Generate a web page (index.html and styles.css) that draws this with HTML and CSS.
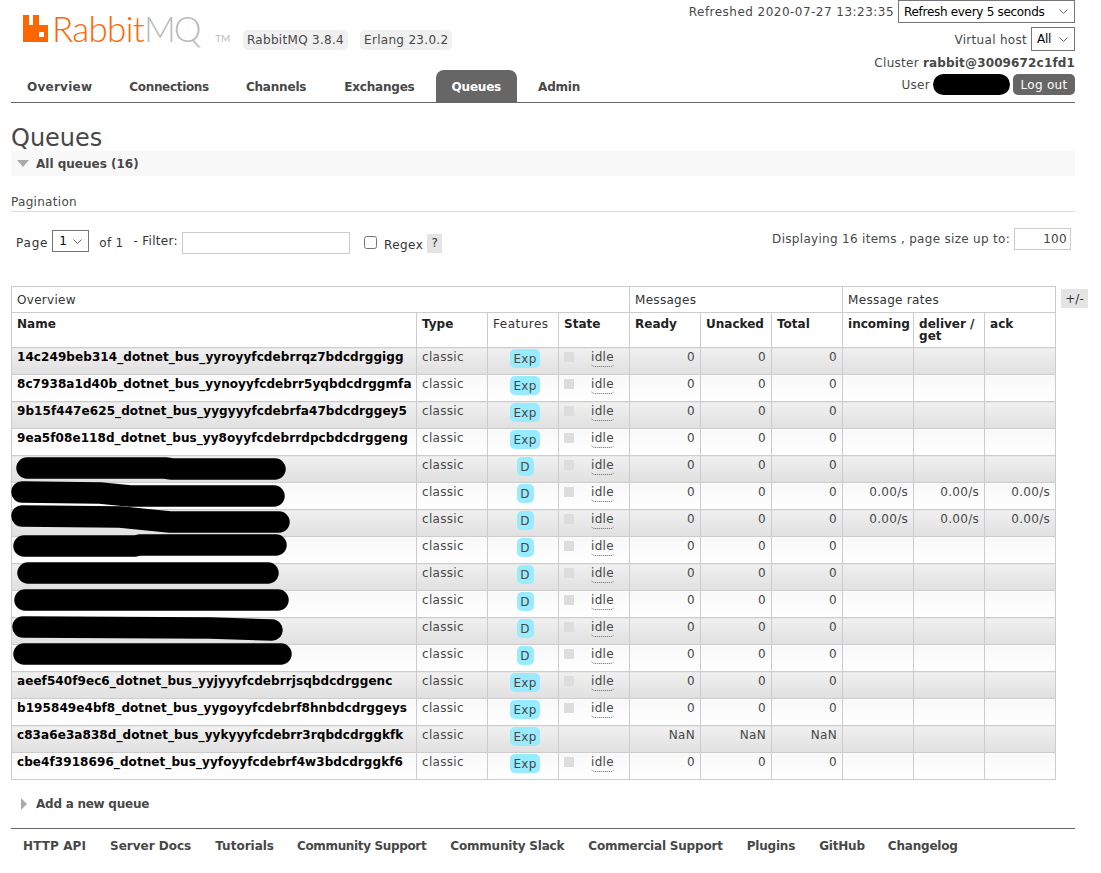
FILE: index.html
```html
<!DOCTYPE html>
<html lang="en">
<head>
  <meta charset="UTF-8">
  <meta name="viewport" content="width=device-width, initial-scale=1.0">
  <title>RabbitMQ Management</title>
  <link rel="stylesheet" href="styles.css">
</head>
<body>
  <!-- Header -->
  <div class="header">
    <div class="header-left">
      <div class="brand">
        <div class="logo">
          <svg class="logo-icon" width="25" height="27" viewBox="0 0 25 27">
            <path fill="#ff6600" d="M0 0H6V10H10V0H16V10H25V27H0Z"/>
            <rect fill="#fff" x="16" y="17" width="5" height="5"/>
          </svg>
          <span class="logo-rabbit">Rabbit</span><span class="logo-mq">MQ</span><span class="logo-tm">TM</span>
        </div>
        <span class="version">RabbitMQ 3.8.4</span>
        <span class="version">Erlang 23.0.2</span>
      </div>
      <ul class="tabs">
        <li><a href="#">Overview</a></li>
        <li><a href="#">Connections</a></li>
        <li><a href="#">Channels</a></li>
        <li><a href="#">Exchanges</a></li>
        <li><a href="#" class="active">Queues</a></li>
        <li><a href="#">Admin</a></li>
      </ul>
    </div>
    <div class="header-right">
      <div class="status-row">
        <span class="refreshed">Refreshed 2020-07-27 13:23:35</span>
        <select class="refresh-select"><option>Refresh every 5 seconds</option></select>
      </div>
      <div class="status-row vhost-row">
        <span class="vhost-label">Virtual host</span>
        <select class="vhost-select"><option>All</option></select>
      </div>
      <div class="status-row cluster-row"><span>Cluster</span> <b>rabbit@3009672c1fd1</b></div>
      <div class="status-row user-row">
        User
        <span class="user-blob"></span>
        <button class="logout">Log out</button>
      </div>
    </div>
  </div>

  <!-- Main Content -->
  <div class="main-content">
    <h1>Queues</h1>
    <div class="section-head"><span class="arrow-down"></span>All queues (16)</div>

    <h3 class="pagination-title">Pagination</h3>
    <div class="pagination">
      <div class="pagination-left">
        <span class="page-label">Page</span>
        <select class="page-select"><option>1</option></select>
        <span class="of-pages">of 1</span>
        <span class="filter-label">- Filter:</span>
        <input class="filter-input" type="text">
        <input class="regex-check" type="checkbox">
        <span class="regex-label">Regex</span>
        <span class="help">?</span>
      </div>
      <div class="pagination-right">
        Displaying 16 items , page size up to:
        <input class="page-size" type="text" value="100">
      </div>
    </div>

    <div class="table-wrap">
      <table class="list">
        <colgroup>
          <col class="col-name"><col class="col-data"><col class="col-data"><col class="col-data">
          <col class="col-data"><col class="col-data"><col class="col-data">
          <col class="col-data"><col class="col-data"><col class="col-data">
        </colgroup>
        <thead>
          <tr class="group-row">
            <th colspan="4">Overview</th>
            <th colspan="3">Messages</th>
            <th colspan="3">Message rates</th>
          </tr>
          <tr class="title-row">
            <th>Name</th><th>Type</th><th class="plain">Features</th><th>State</th>
            <th>Ready</th><th>Unacked</th><th>Total</th>
            <th>incoming</th><th>deliver / get</th><th>ack</th>
          </tr>
        </thead>
        <tbody id="queueRows"></tbody>
      </table>

      <!-- hand drawn redaction over the queue names -->
      <svg class="redactions" width="300" height="400" viewBox="0 287 300 400">
        <g fill="none" stroke="#000" stroke-width="21.500" stroke-linecap="round" stroke-linejoin="round">
          <path d="M27 469H165L172 470H275"/>
          <path d="M22 493L100 494L130 497H274"/>
          <path d="M22 517L120 518L170 523H279"/>
          <path d="M24 547H135"/>
          <path d="M140 546H276"/>
          <path d="M28 574H268"/>
          <path d="M25 601H278"/>
          <path d="M23 628L210 629L272 631"/>
          <path d="M24 655H281"/>
        </g>
      </svg>
      <button class="columns-toggle">+/-</button>
    </div>

    <div class="add-queue"><span class="arrow-right"></span>Add a new queue</div>
  </div>

  <!-- Footer -->
  <ul class="footer">
    <li><a href="#">HTTP API</a></li>
    <li><a href="#">Server Docs</a></li>
    <li><a href="#">Tutorials</a></li>
    <li><a href="#">Community Support</a></li>
    <li><a href="#">Community Slack</a></li>
    <li><a href="#">Commercial Support</a></li>
    <li><a href="#">Plugins</a></li>
    <li><a href="#">GitHub</a></li>
    <li><a href="#">Changelog</a></li>
  </ul>

  <script>
    // name, feature badge, rates or NaN row
    const queues = [
      ["14c249beb314_dotnet_bus_yyroyyfcdebrrqz7bdcdrggigg", "Exp"],
      ["8c7938a1d40b_dotnet_bus_yynoyyfcdebrr5yqbdcdrggmfa", "Exp"],
      ["9b15f447e625_dotnet_bus_yygyyyfcdebrfa47bdcdrggey5", "Exp"],
      ["9ea5f08e118d_dotnet_bus_yy8oyyfcdebrrdpcbdcdrggeng", "Exp"],
      ["", "D"],
      ["", "D", "rates"],
      ["", "D", "rates"],
      ["", "D"],
      ["", "D"],
      ["", "D"],
      ["", "D"],
      ["", "D"],
      ["aeef540f9ec6_dotnet_bus_yyjyyyfcdebrrjsqbdcdrggenc", "Exp"],
      ["b195849e4bf8_dotnet_bus_yygoyyfcdebrf8hnbdcdrggeys", "Exp"],
      ["c83a6e3a838d_dotnet_bus_yykyyyfcdebrr3rqbdcdrggkfk", "Exp", "nan"],
      ["cbe4f3918696_dotnet_bus_yyfoyyfcdebrf4w3bdcdrggkf6", "Exp"],
    ];

    const rows = queues.map(function ([name, feature, flag], i) {
      const isNan = flag === "nan";
      const count = isNan ? "NaN" : "0";
      const rate = flag === "rates" ? "0.00/s" : "";
      const state = isNan ? "" : '<span class="state-box"></span><span class="state-idle">idle</span>';
      return `<tr class="${i % 2 ? "alt2" : "alt1"}">
        <td class="name">${name}</td>
        <td>classic</td>
        <td class="center"><span class="badge">${feature}</span></td>
        <td class="state">${state}</td>
        <td class="num">${count}</td><td class="num">${count}</td><td class="num">${count}</td>
        <td class="num">${rate}</td><td class="num">${rate}</td><td class="num">${rate}</td>
      </tr>`;
    });
    document.getElementById("queueRows").innerHTML = rows.join("");
  </script>
</body>
</html>
```

FILE: styles.css
```css
/* General Reset */
* {
  margin: 0;
  padding: 0;
  box-sizing: border-box;
  font-family: "DejaVu Sans", Verdana, sans-serif;
}

body {
  background-color: #fff;
  color: #484848;
  font-size: 12px;
  letter-spacing: 0.3px;
  height: 873px;
  overflow: hidden;
}

b {
  letter-spacing: 0.15px;
}

/* Header */
.header {
  display: flex;
  justify-content: space-between;
  height: 103px;
  margin: 0 26px 0 11px;
  border-bottom: 1px solid #666;
}

.brand {
  display: flex;
  height: 70px;
  padding-left: 12px;
}

.logo {
  display: flex;
  align-items: baseline;
  width: 220px;
  padding-top: 9px;
  height: 46px;
}

.logo-icon {
  align-self: flex-start;
  margin-top: 6px;
  margin-right: 4px;
  flex: none;
}

.logo-rabbit,
.logo-mq,
.logo-tm {
  font-family: "Lato", sans-serif;
  font-weight: 300;
  font-size: 35px;
  line-height: 38px;
  letter-spacing: -0.7px;
}

.logo-rabbit {
  color: #ff6600;
}

.logo-mq {
  color: #bbb;
  letter-spacing: -2.2px;
}

.logo-tm {
  color: #bbb;
  font-weight: 400;
  font-size: 10px;
  line-height: 10px;
  margin-left: 16px;
  letter-spacing: 0;
}

.version {
  align-self: flex-start;
  margin-top: 30px;
  margin-right: 12px;
  padding: 0 4px;
  height: 20px;
  line-height: 20px;
  background-color: #f0f0f0;
  border-radius: 5px;
}

.tabs {
  display: flex;
  list-style: none;
  height: 32px;
}

.tabs a {
  display: block;
  padding: 0 15px 0 16px;
  margin-right: 6px;
  height: 32px;
  line-height: 34px;
  font-weight: bold;
  letter-spacing: -0.2px;
  color: #484848;
  text-decoration: none;
  border-radius: 8px 8px 0 0;
}

.tabs li:first-child a {
  letter-spacing: 0.25px;
}

.tabs li:nth-child(2) a {
  letter-spacing: -0.32px;
}

.tabs li:nth-child(3) a,
.tabs li:nth-child(4) a {
  margin-right: 7px;
}

.tabs li:nth-child(4) a {
  margin-right: 6px;
}

.tabs a.active {
  background-color: #666;
  color: #fff;
  padding-right: 16px;
  margin-right: 5px;
}

.header-right {
  display: flex;
  flex-direction: column;
  align-items: flex-end;
}

.status-row {
  display: flex;
  align-items: center;
}

.refreshed {
  letter-spacing: 0.47px;
  margin-top: 1px;
}

.vhost-label {
  margin-top: 2px;
}

.refresh-select,
.vhost-select,
.page-select {
  appearance: none;
  font-size: 12px;
  letter-spacing: -0.3px;
  color: #000;
  padding-left: 5px;
  background: #fff url("data:image/svg+xml,%3Csvg xmlns='http://www.w3.org/2000/svg' width='9' height='5'%3E%3Cpath d='M.5.5l4 4 4-4' fill='none' stroke='%23666'/%3E%3C/svg%3E") no-repeat right 6px center;
  border: 1px solid #767676;
  border-radius: 0;
}

.refresh-select {
  width: 177px;
  height: 23px;
  margin-left: 4px;
}

.vhost-row {
  margin-top: 4px;
}

.vhost-select {
  width: 44px;
  height: 24px;
  margin-left: 4px;
}

.cluster-row {
  margin-top: 4px;
  height: 16px;
}

.cluster-row b {
  margin-left: 4px;
}

.user-row {
  margin-top: 3px;
}

.user-blob {
  display: block;
  width: 77px;
  height: 21px;
  margin: 0 3px 0 3px;
  background-color: #000;
  border-radius: 11px;
}

.logout {
  width: 62px;
  height: 21px;
  border: 0;
  border-radius: 5px;
  background-color: #666;
  color: #fff;
  font-size: 12px;
  letter-spacing: 0.3px;
}

/* Main Content */
.main-content {
  margin: 0 26px 0 11px;
}

h1 {
  font-weight: normal;
  font-size: 24px;
  letter-spacing: 0;
  line-height: 30px;
  margin-top: 20px;
  color: #484848;
}

.section-head {
  display: flex;
  align-items: center;
  height: 25px;
  background-color: #f8f8f8;
  font-weight: bold;
  letter-spacing: 0;
  padding-left: 6px;
  margin-top: -2px;
}

.arrow-down {
  width: 0;
  height: 0;
  margin-right: 7px;
  border-left: 6px solid transparent;
  border-right: 6px solid transparent;
  border-top: 7px solid #aaa;
}

.pagination-title {
  margin-top: 18px;
  height: 18px;
  font-weight: normal;
  font-size: 12px;
  line-height: 17px;
  border-bottom: 1px solid #ddd;
}

.pagination {
  display: flex;
  justify-content: space-between;
  margin-top: 19px;
  height: 55px;
  padding-left: 5px;
}

.pagination-left {
  display: flex;
  align-items: flex-start;
  height: 24px;
  color: #333;
}

.pagination-left span {
  line-height: 24px;
}

.page-label {
  letter-spacing: 0.8px;
}

.page-select {
  width: 37px;
  height: 22px;
  margin: -1px 10px 0 4px;
  padding-left: 6px;
}

.filter-label {
  margin: -2px 4px 0 10px;
}

.filter-input {
  width: 168px;
  height: 22px;
  margin-top: 1px;
  border: 1px solid #ccc;
}

.regex-check {
  width: 13px;
  height: 13px;
  margin: 5px 7px 0 14px;
}

.regex-label {
  margin-top: 2px;
  letter-spacing: 0.45px;
}

.help {
  display: block;
  width: 15px;
  height: 19px;
  line-height: 19px !important;
  margin: 3px 0 0 4px;
  background-color: #e4e4e4;
  text-align: center;
}

.pagination-right {
  display: flex;
  align-items: flex-start;
  line-height: 23px;
  padding-right: 4px;
  margin-top: -3px;
}

.page-size {
  width: 57px;
  height: 22px;
  margin-left: 4px;
  padding-right: 3px;
  border: 1px solid #ccc;
  text-align: right;
  font-size: 12px;
  letter-spacing: 0.3px;
  color: #444;
}

/* Queue table */
.table-wrap {
  position: relative;
}

.list {
  width: 1044px;
  table-layout: fixed;
  border-collapse: collapse;
}

.col-name { width: 405px; }
.col-data { width: 71px; }

.list th,
.list td {
  border: 1px solid #ccc;
  padding: 0 5px;
  vertical-align: top;
  text-align: left;
}

.group-row th {
  height: 24px;
  padding-top: 1px;
  font-weight: normal;
  line-height: 24px;
  color: #333;
}

.title-row th {
  height: 35px;
  padding-top: 5px;
  line-height: 12px;
  font-weight: bold;
  letter-spacing: 0;
  color: #222;
}

.title-row th.plain {
  font-weight: normal;
  letter-spacing: 0.5px;
  color: #333;
}

.list td {
  height: 27px;
  padding-top: 2px;
  line-height: 15px;
}

.alt1 td {
  background: linear-gradient(#f0f0f0, #e0e0e0);
}

.alt2 td {
  background: linear-gradient(#f8f8f8, #fff);
}

.list td.name {
  font-weight: bold;
  letter-spacing: 0.08px;
  color: #000;
  white-space: nowrap;
  padding-right: 0;
}

.list td.num {
  text-align: right;
}

.list td.center {
  text-align: center;
  padding: 0 3px 0 7px;
}

.badge {
  display: inline-block;
  min-width: 17px;
  margin-top: 1px;
  padding: 0 3px;
  height: 19px;
  line-height: 20px;
  background-color: #99ebff;
  border-radius: 5px;
  color: #484848;
}

.state-box {
  display: inline-block;
  width: 10px;
  height: 10px;
  margin-right: 17px;
  margin-top: 2px;
  vertical-align: top;
  background-color: #ddd;
}

.state-idle {
  display: inline-block;
  border-bottom: 1px dotted #666;
  border-radius: 4px;
  height: 17px;
}

.redactions {
  position: absolute;
  left: -11px;
  top: 0;
  pointer-events: none;
}

.columns-toggle {
  position: absolute;
  left: 1050px;
  top: 3px;
  width: 27px;
  height: 19px;
  border: 0;
  background-color: #e4e4e4;
  color: #333;
  font-size: 12px;
}

.add-queue {
  display: flex;
  align-items: center;
  margin-top: 15px;
  padding-left: 10px;
  height: 18px;
  font-weight: bold;
  letter-spacing: -0.25px;
}

.arrow-right {
  width: 0;
  height: 0;
  margin-right: 9px;
  border-top: 6px solid transparent;
  border-bottom: 6px solid transparent;
  border-left: 6px solid #aaa;
}

/* Footer */
.footer {
  display: flex;
  list-style: none;
  margin: 15px 26px 0 11px;
  padding: 10px 0 0 12px;
  border-top: 1px solid #666;
}

.footer li {
  margin-right: 24px;
}

.footer a {
  font-weight: bold;
  letter-spacing: 0;
  color: #484848;
  text-decoration: none;
}

.footer li:first-child a {
  letter-spacing: 0.1px;
}

.footer li:nth-child(3) {
  margin-right: 23px;
}

.footer li:nth-child(n+4) a {
  letter-spacing: -0.2px;
}

.footer li:nth-child(4) a {
  letter-spacing: -0.35px;
}

.footer li:nth-child(8) {
  margin-right: 23px;
}
```
